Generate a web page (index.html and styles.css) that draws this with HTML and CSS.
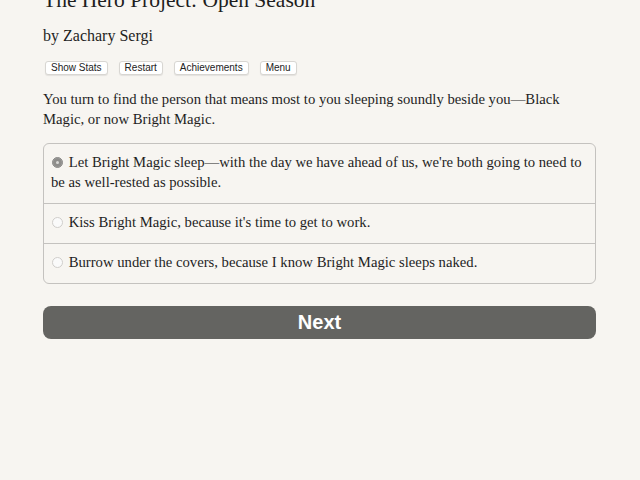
FILE: index.html
```html
<!DOCTYPE html>
<html lang="en">
<head>
  <meta charset="UTF-8" />
  <title>The Hero Project: Open Season</title>
  <link rel="stylesheet" href="styles.css">
</head>
<body>

<div class="page">
  <header>
    <h1>The Hero Project: Open Season</h1>
    <h2>by Zachary Sergi</h2>
    <nav class="toolbar">
      <button>Show Stats</button>
      <button>Restart</button>
      <button>Achievements</button>
      <button>Menu</button>
    </nav>
  </header>

  <p class="story">You turn to find the person that means most to you sleeping soundly beside you—Black Magic, or now Bright Magic.</p>

  <form class="choices">
    <label class="choice">
      <input type="radio" name="choice" checked>
      Let Bright Magic sleep—with the day we have ahead of us, we're both going to need to be as well-rested as possible.
    </label>
    <label class="choice">
      <input type="radio" name="choice">
      Kiss Bright Magic, because it's time to get to work.
    </label>
    <label class="choice">
      <input type="radio" name="choice">
      Burrow under the covers, because I know Bright Magic sleeps naked.
    </label>
  </form>

  <button class="next">Next</button>
</div>

</body>
</html>
```

FILE: styles.css
```css
body {
  font-family: "Liberation Serif", "Times New Roman", serif;
  background: #f7f5f1;
  color: #1e1e1e;
  margin: 0;
  padding: 0 44px 0 43px;
}
.page {
  max-width: 553px;
}
h1 {
  font-size: 21.5px;
  font-weight: normal;
  margin: -14px 0 0;
  line-height: 28px;
}
h2 {
  font-size: 16px;
  font-weight: normal;
  margin: 12px 0 0;
  line-height: 20px;
}
.toolbar {
  display: flex;
  gap: 11px;
  margin: 15px 0 0 2px;
}
.toolbar button {
  font-family: "Liberation Sans", Arial, sans-serif;
  font-size: 10px;
  line-height: 12px;
  padding: 0 5px;
  background: #fff;
  border: 1px solid #d8d6d2;
  border-radius: 3px;
  color: #222;
  box-shadow: 0 1px 1px rgba(0, 0, 0, 0.08);
}
.story {
  font-size: 14.7px;
  line-height: 20px;
  margin: 14px 0 0;
}
.choices {
  margin: 14px 0 0;
  border: 1px solid #c4c2bf;
  border-radius: 6px;
}
.choice {
  display: block;
  font-size: 14.7px;
  line-height: 20px;
  padding: 8px 8px 11px 7px;
  border-top: 1px solid #c4c2bf;
}
.choice:first-child {
  border-top: none;
}
.choice input {
  appearance: none;
  width: 11px;
  height: 11px;
  margin: 0 2px 0 1px;
  border: 1px solid #d0cecb;
  border-radius: 50%;
  background: #fafafa;
  vertical-align: -1px;
}
.choice input:checked {
  background: #8e8d8b;
  border-color: #8e8d8b;
  box-shadow: inset 0 0 0 3px #8e8d8b, inset 0 0 0 5px #d9d8d6;
}
.next {
  display: block;
  width: 100%;
  height: 33px;
  margin-top: 22px;
  background: #646461;
  color: #fff;
  border: none;
  border-radius: 8px;
  font-family: "Liberation Sans", Arial, sans-serif;
  font-weight: bold;
  font-size: 20px;
}
```
